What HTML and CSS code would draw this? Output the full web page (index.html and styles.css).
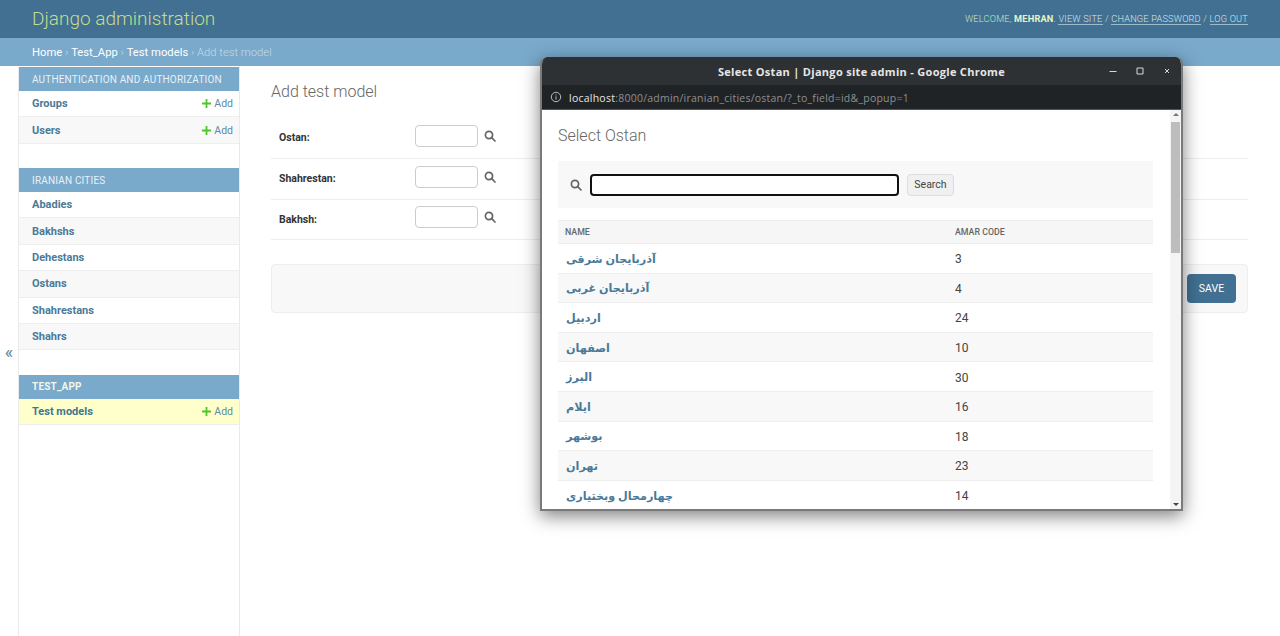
FILE: index.html
```html
<!DOCTYPE html>
<html lang="en">
<head>
<meta charset="utf-8">
<title>Add test model</title>
<link rel="stylesheet" href="styles.css">
</head>
<body>
<header class="site-header">
  <div class="branding">Django administration</div>
  <div class="user-tools">WELCOME, <strong>MEHRAN</strong>. <a>VIEW SITE</a> / <a>CHANGE PASSWORD</a> / <a>LOG OUT</a></div>
</header>
<nav class="breadcrumbs"><a>Home</a> › <a>Test_App</a> › <a>Test models</a> › Add test model</nav>
<div class="page">
  <div class="toggle">«</div>
  <aside class="sidebar">
    <section class="app">
      <h2 class="caption">AUTHENTICATION AND AUTHORIZATION</h2>
      <div class="row"><a class="model">Groups</a><a class="add"><svg class="plus" viewBox="0 0 10 10"><path d="M4 0h2v4h4v2H6v4H4V6H0V4h4z"/></svg>Add</a></div>
      <div class="row alt"><a class="model">Users</a><a class="add"><svg class="plus" viewBox="0 0 10 10"><path d="M4 0h2v4h4v2H6v4H4V6H0V4h4z"/></svg>Add</a></div>
    </section>
    <section class="app">
      <h2 class="caption">IRANIAN CITIES</h2>
      <div class="row"><a class="model">Abadies</a></div>
      <div class="row alt"><a class="model">Bakhshs</a></div>
      <div class="row"><a class="model">Dehestans</a></div>
      <div class="row alt"><a class="model">Ostans</a></div>
      <div class="row"><a class="model">Shahrestans</a></div>
      <div class="row alt"><a class="model">Shahrs</a></div>
    </section>
    <section class="app">
      <h2 class="caption strong">TEST_APP</h2>
      <div class="row current"><a class="model">Test models</a><a class="add"><svg class="plus" viewBox="0 0 10 10"><path d="M4 0h2v4h4v2H6v4H4V6H0V4h4z"/></svg>Add</a></div>
    </section>
  </aside>
  <main class="content">
    <h1 class="title">Add test model</h1>
    <div class="form-row"><label>Ostan:</label><input class="fk" type="text"><svg class="lens" viewBox="0 0 12 12"><circle cx="5" cy="5" r="3.6"/><path d="M7.7 7.7 11 11"/></svg></div>
    <div class="form-row"><label>Shahrestan:</label><input class="fk" type="text"><svg class="lens" viewBox="0 0 12 12"><circle cx="5" cy="5" r="3.6"/><path d="M7.7 7.7 11 11"/></svg></div>
    <div class="form-row"><label>Bakhsh:</label><input class="fk" type="text"><svg class="lens" viewBox="0 0 12 12"><circle cx="5" cy="5" r="3.6"/><path d="M7.7 7.7 11 11"/></svg></div>
    <div class="submit-row"><button class="save" type="button">SAVE</button></div>
  </main>
</div>

<div class="popup">
  <div class="titlebar">
    <span class="win-title">Select Ostan | Django site admin - Google Chrome</span>
    <span class="win-controls">
      <svg viewBox="0 0 10 10"><path d="M1.5 5.5h7"/></svg>
      <svg viewBox="0 0 10 10"><path d="M2 2h6v6H2z"/></svg>
      <svg viewBox="0 0 10 10"><path d="M3 3l4 4M7 3l-4 4"/></svg>
    </span>
  </div>
  <div class="urlbar">
    <svg class="info" viewBox="0 0 12 12"><circle cx="6" cy="6" r="4.7"/><path d="M6 5.4v3.2M6 3.4v1"/></svg>
    <span class="url"><b>localhost</b>:8000/admin/iranian_cities/ostan/?_to_field=id&amp;_popup=1</span>
  </div>
  <div class="viewport">
    <div class="pop-content">
      <h1 class="pop-title">Select Ostan</h1>
      <div class="toolbar">
        <svg class="lens" viewBox="0 0 12 12"><circle cx="5" cy="5" r="3.6"/><path d="M7.7 7.7 11 11"/></svg>
        <div class="searchbox"></div>
        <button class="search-btn" type="button">Search</button>
      </div>
      <div class="table">
        <div class="thead"><span class="c-name">NAME</span><span class="c-code">AMAR CODE</span></div>
        <div class="tr"><span class="c-name"><a dir="rtl">آذربایجان شرقی</a></span><span class="c-code">3</span></div>
        <div class="tr alt"><span class="c-name"><a dir="rtl">آذربایجان غربی</a></span><span class="c-code">4</span></div>
        <div class="tr"><span class="c-name"><a dir="rtl">اردبیل</a></span><span class="c-code">24</span></div>
        <div class="tr alt"><span class="c-name"><a dir="rtl">اصفهان</a></span><span class="c-code">10</span></div>
        <div class="tr"><span class="c-name"><a dir="rtl">البرز</a></span><span class="c-code">30</span></div>
        <div class="tr alt"><span class="c-name"><a dir="rtl">ایلام</a></span><span class="c-code">16</span></div>
        <div class="tr"><span class="c-name"><a dir="rtl">بوشهر</a></span><span class="c-code">18</span></div>
        <div class="tr alt"><span class="c-name"><a dir="rtl">تهران</a></span><span class="c-code">23</span></div>
        <div class="tr"><span class="c-name"><a dir="rtl">چهارمحال وبختیاری</a></span><span class="c-code">14</span></div>
      </div>
    </div>
    <div class="scrollbar">
      <div class="arrow up"></div>
      <div class="thumb"></div>
      <div class="arrow down"></div>
    </div>
  </div>
</div>
</body>
</html>
```

FILE: styles.css
```css
* { box-sizing: border-box; }
html, body { margin: 0; height: 100%; overflow: hidden; }
body { font-family: Roboto, "DejaVu Sans", sans-serif; font-size: 13px; color: #333; background: #fff; }

.site-header { height: 38px; background: #417092; display: flex; align-items: center; justify-content: space-between; padding: 0 32px 2px; }
.branding { font-size: 19px; font-weight: 300; color: #c6dd8f; }
.user-tools { font-size: 9.2px; font-weight: 300; letter-spacing: 0.2px; color: #c9e4c4; }
.user-tools strong { font-weight: 700; color: #e4f5c8; }
.user-tools a { color: #d5e6ee; border-bottom: 1px solid #9dbccb; }

.breadcrumbs { height: 28px; background: #79a9cb; color: #c4dce8; font-size: 11.25px; font-weight: 300; padding: 0 32px; display: flex; align-items: center; white-space: pre; }
.breadcrumbs a { color: #fff; font-weight: 400; }

.page { display: flex; height: 570px; }
.toggle { width: 18px; flex: none; display: flex; align-items: center; justify-content: center; color: #5f8ba3; font-size: 18px; }
.sidebar { width: 222px; flex: none; border-right: 1px solid #eaeaea; border-left: 1px solid #eaeaea; padding-top: 1px; }
.app { margin-bottom: 24.2px; }
.caption { margin: 0; height: 24px; padding-left: 13px; background: #79a9cb; color: #e8f2f7; font-size: 10px; font-weight: 400; letter-spacing: 0.18px; line-height: 25px; white-space: nowrap; }
.caption.strong { font-weight: 700; color: #f2f7e8; line-height: 23px; }
.row { height: 26.4px; display: flex; align-items: center; justify-content: space-between; padding: 0 6px 0 13px; border-bottom: 1px solid #eee; font-size: 11px; }
.row.alt { background: #f8f8f8; }
.row.current { background: #ffffcc; padding-top: 1px; }
.model { color: #4a7a98; font-weight: 700; }
.current .model { color: #417690; }
.add { color: #5a8ba3; display: flex; align-items: center; gap: 3px; font-size: 10.5px; }
.plus { width: 9px; height: 9px; fill: #4fc72a; }

.content { flex: 1; padding: 16px 32px 0 31px; min-width: 0; }
.title { margin: 0 0 16px; font-size: 16px; font-weight: 300; color: #666; line-height: 20px; }
.form-row { height: 40.8px; display: flex; align-items: center; padding-left: 8px; border-bottom: 1px solid #eee; }
.form-row label { width: 136px; font-size: 10.5px; font-weight: 700; color: #333; }
.fk { width: 63px; height: 22px; border: 1px solid #ccc; border-radius: 4px; background: #fff; margin: -4px 0 0; padding: 0; }
.lens { width: 12px; height: 12px; fill: none; stroke: #666; stroke-width: 1.7; stroke-linecap: round; margin-left: 6px; margin-top: -4px; }
.submit-row { margin-top: 24px; height: 49px; background: #f8f8f8; border: 1px solid #eee; border-radius: 4px; display: flex; align-items: center; justify-content: flex-end; padding-right: 11px; }
.save { width: 49px; height: 29px; background: #417092; color: #fff; border: 0; border-radius: 4px; font-family: inherit; font-size: 10.5px; padding: 0; }

.popup { position: absolute; left: 540px; top: 57px; width: 643px; height: 454px; background: #fff; border: 2px solid #7a7a7a; border-top: 0; border-radius: 7px 7px 0 0; box-shadow: 0 5px 18px rgba(0,0,0,.5); display: flex; flex-direction: column; overflow: hidden; }
.titlebar { height: 28px; background: #2e3133; display: flex; align-items: center; justify-content: center; position: relative; flex: none; }
.win-title { font-family: "Open Sans", sans-serif; font-size: 11px; font-weight: 700; color: #e6e6e6; letter-spacing: 0.3px; }
.win-controls { position: absolute; right: 9px; top: 9px; display: flex; gap: 17px; }
.win-controls svg { width: 10px; height: 10px; fill: none; stroke: #d8d8d8; stroke-width: 1; }
.urlbar { height: 25px; background: #202325; border-bottom: 1px solid #555; display: flex; align-items: center; padding-left: 8px; flex: none; gap: 7px; }
.info { width: 12px; height: 12px; fill: none; stroke: #bbb; stroke-width: 1; }
.url { font-family: "Open Sans", sans-serif; font-size: 10.5px; color: #8d9092; letter-spacing: 0.24px; padding-top: 2px; }
.url b { font-weight: 400; color: #e4e4e4; }
.viewport { flex: 1; display: flex; min-height: 0; }
.pop-content { flex: 1; min-width: 0; padding: 15px 17px 0 16px; overflow: hidden; }
.pop-title { margin: 0 0 15px; font-size: 16px; font-weight: 300; color: #666; line-height: 21px; }
.toolbar { height: 47px; background: #f8f8f8; display: flex; align-items: center; padding-left: 12px; }
.toolbar .lens { margin: 0 8px 0 0; }
.searchbox { width: 309px; height: 22px; border: 2px solid #111; border-radius: 4px; background: #fff; }
.search-btn { width: 47px; height: 22px; margin-left: 8px; background: #f0f0f0; border: 1px solid #ddd; border-radius: 4px; font-family: inherit; font-size: 10.5px; color: #444; padding: 0; }
.table { margin-top: 12px; }
.thead { height: 24px; background: #f6f6f6; border-top: 1px solid #eee; border-bottom: 1px solid #eee; display: flex; align-items: center; font-size: 8.8px; font-weight: 500; color: #666; padding-left: 7px; }
.thead .c-code { color: #666; }
.tr { height: 29.6px; display: flex; align-items: center; border-bottom: 1px solid #eee; padding: 2px 0 0 7px; font-size: 12px; }
.tr.alt { background: #f8f8f8; }
.c-name { width: 390px; flex: none; text-align: left; }
.tr .c-name { color: #4a7a98; font-weight: 700; font-size: 11.2px; padding-left: 1px; }
.c-code { color: #444; }
.scrollbar { width: 11px; flex: none; background: #f4f4f4; display: flex; flex-direction: column; align-items: center; justify-content: flex-start; }
.thumb { width: 9px; height: 131px; background: #bdbdbd; margin-top: 6px; }
.arrow { width: 0; height: 0; border-left: 3px solid transparent; border-right: 3px solid transparent; }
.arrow.up { border-bottom: 3px solid #777; margin-top: 3px; }
.arrow.down { border-top: 3px solid #444; margin-top: auto; margin-bottom: 3px; }
```
